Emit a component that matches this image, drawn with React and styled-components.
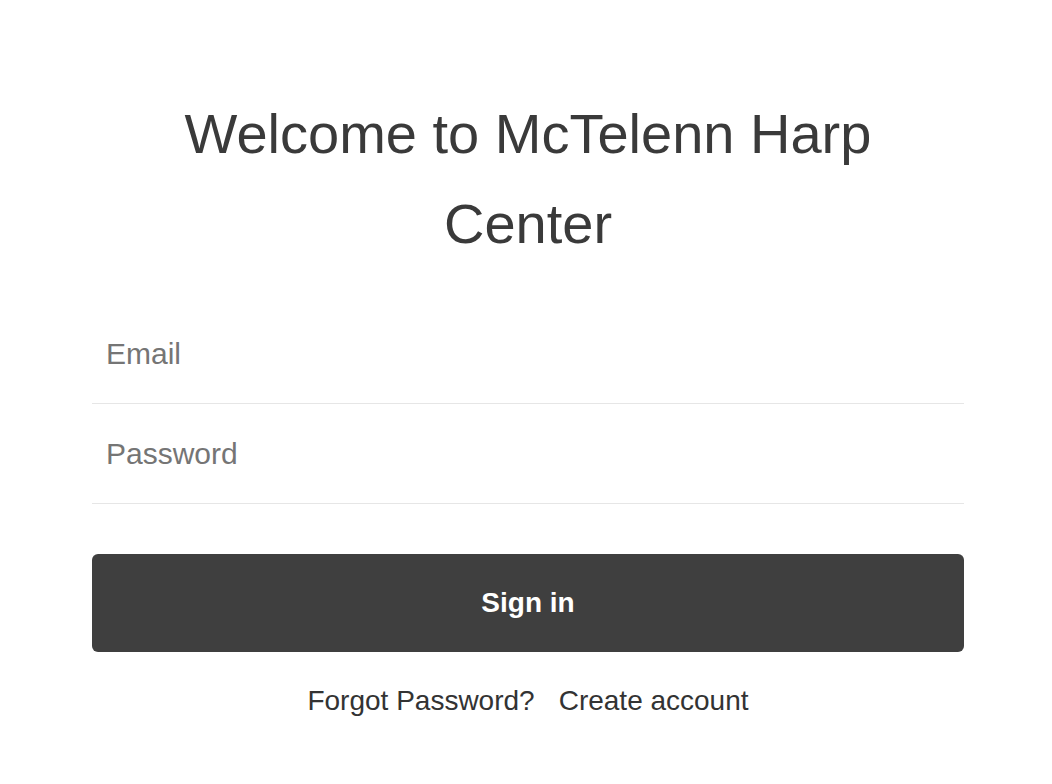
import React, { useState } from 'react'
import styled, { createGlobalStyle } from 'styled-components'

const GlobalStyle = createGlobalStyle`
  body {
    margin: 0;
    background: #ffffff;
    font-family: "Liberation Sans", Arial, sans-serif;
  }
`

const Page = styled.main`
  width: 872px;
  margin: 0 auto;
  padding: 89px 0 0 4px;
`

const Title = styled.h1`
  margin: 0 0 35px;
  font-size: 56px;
  font-weight: 400;
  line-height: 90px;
  text-align: center;
  color: #3a3a3a;
  padding: 0 80px;
`

const Form = styled.form`
  display: flex;
  flex-direction: column;
`

const Field = styled.input`
  height: 100px;
  box-sizing: border-box;
  border: none;
  border-bottom: 1px solid #e6e6e6;
  padding: 0 14px;
  font-family: inherit;
  font-size: 30px;
  color: #333;
  outline: none;
  background: transparent;
  &::placeholder {
    color: #757575;
  }
`

const Submit = styled.button`
  margin-top: 50px;
  height: 98px;
  border: none;
  border-radius: 6px;
  background: #3f3f3f;
  color: #ffffff;
  font-family: inherit;
  font-size: 28px;
  font-weight: 700;
  cursor: pointer;
`

const Links = styled.div`
  margin-top: 29px;
  display: flex;
  justify-content: center;
  gap: 24px;
  line-height: 40px;
`

const LinkText = styled.a`
  font-size: 28px;
  color: #333333;
  text-decoration: none;
  cursor: pointer;
`

export default function App() {
  const [form, setForm] = useState({ email: '', password: '' })

  const handleChange = e => {
    setForm({ ...form, [e.target.name]: e.target.value })
  }

  return (
    <>
      <GlobalStyle />
      <Page>
        <Title>Welcome to McTelenn Harp Center</Title>
        <Form onSubmit={e => e.preventDefault()}>
          <Field
            type="email"
            name="email"
            placeholder="Email"
            value={form.email}
            onChange={handleChange}
          />
          <Field
            type="password"
            name="password"
            placeholder="Password"
            value={form.password}
            onChange={handleChange}
          />
          <Submit type="submit">Sign in</Submit>
        </Form>
        <Links>
          <LinkText>Forgot Password?</LinkText>
          <LinkText>Create account</LinkText>
        </Links>
      </Page>
    </>
  )
}
